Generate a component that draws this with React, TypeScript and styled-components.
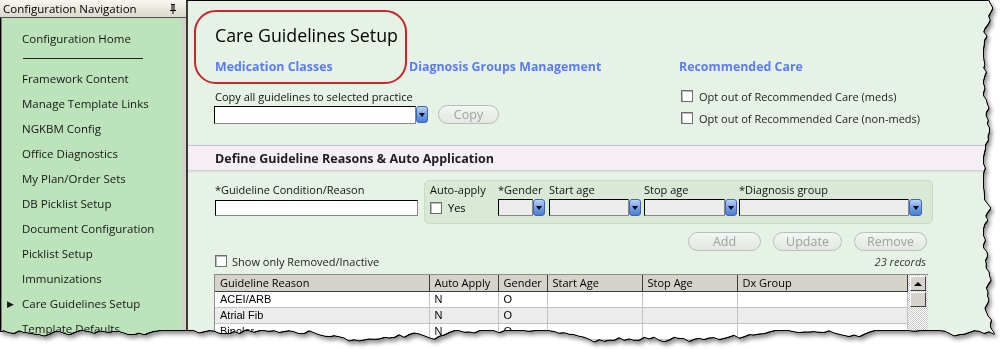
import React from "react";
import styled, { createGlobalStyle } from "styled-components";

const GlobalStyle = createGlobalStyle`
  html, body { margin: 0; padding: 0; background: #fff; }
  body { font-family: "Open Sans", "Noto Sans", sans-serif; color: #000; }
  * { box-sizing: border-box; }
`;

// deterministic "torn paper" outline for the screenshot clipping
function rnd(i: number) {
  const v = Math.sin(i * 127.1 + 311.7) * 43758.5453;
  return v - Math.floor(v);
}

function tornPolygon() {
  const pts: string[] = ["0px 0px", "988px 0px"];
  let x = 988;
  for (let y = 4; y <= 330; y += 4) {
    x += (rnd(y) - 0.5) * 7;
    x = Math.max(983, Math.min(996, x));
    pts.push(`${x.toFixed(1)}px ${y}px`);
  }
  let y = 334;
  for (let xx = 994; xx >= 0; xx -= 5) {
    y += (rnd(xx + 1000) - 0.5) * 6;
    y = Math.max(330, Math.min(342, y));
    pts.push(`${xx}px ${y.toFixed(1)}px`);
  }
  pts.push("0px 331px");
  return `polygon(${pts.join(", ")})`;
}

const TORN = tornPolygon();

const Stage = styled.div`
  width: 1007px;
  height: 349px;
  overflow: hidden;
  background: #fff;
`;

const PaperShadow = styled.div`
  width: 1000px;
  height: 346px;
  filter: drop-shadow(1px 0 0 #000) drop-shadow(0 1px 0 #000)
    drop-shadow(2px 3px 2px rgba(0, 0, 0, 0.45));
`;

const Paper = styled.div`
  width: 1000px;
  height: 346px;
  display: flex;
  background: #e7f2e6;
  clip-path: ${TORN};
`;

/* ---------- navigation ---------- */

const Nav = styled.nav`
  width: 186px;
  flex: none;
  display: flex;
  flex-direction: column;
  background: #d4d0c8;
`;

const NavHeader = styled.div`
  height: 18px;
  display: flex;
  align-items: center;
  justify-content: space-between;
  padding: 0 9px 0 3px;
  background: linear-gradient(#f8f6f0, #dcd8ce);
  border-bottom: 1px solid #505050;
  font-size: 11.5px;
`;

const NavBody = styled.div`
  flex: 1;
  margin-right: 4px;
  padding-top: 8px;
  background: #bde3bb;
  border-left: 1px solid #000;
  box-shadow: inset 1px 0 #808080;
`;

const NavItem = styled.div`
  height: 25px;
  display: flex;
  align-items: center;
  padding-left: 6px;
  font-size: 11.5px;
  color: #161616;
  white-space: nowrap;
`;

const Marker = styled.span`
  width: 15px;
  font-size: 9px;
`;

const NavRule = styled.div`
  height: 15px;
  display: flex;
  align-items: center;
  padding-left: 22px;
  &::after {
    content: "";
    width: 120px;
    height: 1px;
    background: #222;
  }
`;

/* ---------- content ---------- */

const Content = styled.main`
  flex: 1;
  position: relative;
  border-top: 1px solid #000;
  border-left: 2px solid #3a3a3a;
  background: #e7f2e6;
`;

const Highlight = styled.div`
  position: absolute;
  left: 6px;
  top: 9px;
  width: 213px;
  height: 74px;
  border: 2px solid #c3262b;
  border-radius: 22px;
  pointer-events: none;
`;

const Title = styled.h1`
  margin: 23px 0 0 27px;
  font-size: 17.8px;
  line-height: 22px;
  font-weight: normal;
`;

const TopGrid = styled.div`
  display: grid;
  grid-template-columns: 465px 1fr;
  padding-left: 26px;
`;

const Column = styled.div`
  display: flex;
  flex-direction: column;
`;

const LinkRow = styled.div`
  display: flex;
  margin-top: 13px;
  padding-left: 1px;
`;

const LinkText = styled.a<{ $w?: number }>`
  width: ${(p) => (p.$w ? `${p.$w}px` : "auto")};
  font-size: 12.4px;
  line-height: 16px;
  font-weight: bold;
  color: #5a7cf6;
  text-decoration: none;
  white-space: nowrap;
`;

const SmallLabel = styled.div`
  font-size: 11px;
  line-height: 14px;
  color: #111;
  white-space: nowrap;
`;

const CopyLabel = styled(SmallLabel)`
  margin-top: 15px;
  padding-left: 1px;
`;

const CopyRow = styled.div`
  display: flex;
  align-items: center;
  margin-top: 1px;
`;

const TextBox = styled.div<{ $w: number; $h?: number; $grey?: boolean }>`
  width: ${(p) => p.$w}px;
  height: ${(p) => p.$h ?? 17}px;
  background: ${(p) => (p.$grey ? "#ececec" : "#fff")};
  border: 1px solid #000;
  border-color: #000 #888 #888 #000;
`;

const DropButton = styled.div<{ $w?: number }>`
  width: ${(p) => p.$w ?? 12}px;
  height: 17px;
  display: flex;
  align-items: center;
  justify-content: center;
  border: 1px solid #3b64b4;
  border-radius: 3px;
  background: linear-gradient(#b9d3f7, #6f9de6 55%, #4a7fd6);
  &::after {
    content: "";
    border-left: 3px solid transparent;
    border-right: 3px solid transparent;
    border-top: 4px solid #000;
  }
`;

const PillButton = styled.button<{ $w: number }>`
  width: ${(p) => p.$w}px;
  height: 19px;
  padding: 0;
  border: 1px solid #b9bdb9;
  border-radius: 10px;
  background: linear-gradient(#f3f6f3, #e2e8e2);
  font-family: "Open Sans", "Noto Sans", sans-serif;
  font-size: 12.5px;
  line-height: 17px;
  color: #a0a0a0;
`;

const CopyButton = styled(PillButton)`
  margin-left: 10px;
`;

const RecLink = styled(LinkText)`
  margin-top: 13px;
`;

const CheckRow = styled.label<{ $first?: boolean }>`
  display: flex;
  align-items: center;
  gap: 6px;
  height: 22px;
  margin-top: ${(p) => (p.$first ? 10 : 0)}px;
  padding-left: 2px;
  font-size: 11px;
  color: #222;
`;

const Check = styled.span`
  width: 12px;
  height: 12px;
  flex: none;
  background: #fff;
  border: 1px solid #6e6e6e;
  box-shadow: inset 1px 1px #b8b8b8;
`;

const Band = styled.div`
  height: 25px;
  margin-top: 16px;
  display: flex;
  align-items: center;
  padding-left: 27px;
  background: #f5eff5;
  border-top: 1px solid #c9c1c9;
  box-shadow: 0 1px 2px rgba(0, 0, 0, 0.18);
  font-size: 12.5px;
  font-weight: bold;
  color: #202020;
`;

const FormRow = styled.div`
  display: flex;
  margin-top: 10px;
  padding-left: 26px;
`;

const ReasonField = styled.div`
  width: 210px;
  padding-top: 3px;
  display: flex;
  flex-direction: column;
  gap: 3px;
  padding-left: 1px;
`;

const GroupBox = styled.div`
  width: 509px;
  height: 44px;
  display: flex;
  padding: 2px 0 0 5px;
  background: #d9e9d5;
  border: 1px solid #cadbc7;
  border-radius: 5px;
`;

const Field = styled.div<{ $w?: number }>`
  width: ${(p) => (p.$w ? `${p.$w}px` : "auto")};
  flex: none;
  display: flex;
  flex-direction: column;
  gap: 2px;
`;

const Combo = styled.div`
  display: flex;
  height: 17px;
`;

const YesRow = styled.div`
  display: flex;
  align-items: center;
  gap: 6px;
  height: 17px;
  font-size: 11px;
`;

const ButtonRow = styled.div`
  width: 714px;
  margin: 8px 0 0 26px;
  padding-right: 1px;
  display: flex;
  justify-content: flex-end;
  gap: 12px;
`;

const ShowRow = styled.div`
  width: 714px;
  height: 16px;
  margin: 2px 0 0 26px;
  display: flex;
  align-items: center;
  justify-content: space-between;
  padding: 0 2px 0 1px;
`;

const ShowCheck = styled.label`
  display: flex;
  align-items: center;
  gap: 5px;
  font-size: 11px;
  color: #222;
`;

const Records = styled.span`
  font-size: 11px;
  font-style: italic;
  color: #333;
  align-self: flex-end;
`;

const GridBox = styled.div`
  width: 714px;
  height: 80px;
  margin: 5px 0 0 26px;
  display: flex;
  border: 1px solid #8c8c8c;
  background: #fff;
`;

const Table = styled.table`
  border-collapse: collapse;
  table-layout: fixed;
  width: 692px;
  flex: none;
  align-self: flex-start;
`;

const Th = styled.th<{ $w: number }>`
  width: ${(p) => p.$w}px;
  height: 16px;
  padding: 0 5px;
  text-align: left;
  font-weight: normal;
  font-size: 11px;
  line-height: 14px;
  background: #d6d2cc;
  border-right: 1px solid #3c3c3c;
  border-bottom: 1px solid #3c3c3c;
  white-space: nowrap;
`;

const Tr = styled.tr<{ $alt?: boolean }>`
  background: ${(p) => (p.$alt ? "#ececec" : "#fff")};
`;

const Td = styled.td`
  height: 16px;
  padding: 0 5px;
  font-family: "Liberation Sans", Arial, sans-serif;
  font-size: 11px;
  line-height: 14px;
  border-right: 1px solid #c3c3c3;
  border-bottom: 1px solid #c3c3c3;
  white-space: nowrap;
`;

const ScrollBar = styled.div`
  width: 20px;
  flex: none;
  padding: 1px 2px;
  display: flex;
  flex-direction: column;
  gap: 1px;
  background-color: #fff;
  background-image: repeating-conic-gradient(#c8c8c8 0 25%, #fff 0 50%);
  background-size: 2px 2px;
`;

const ScrollButton = styled.div<{ $arrow?: boolean }>`
  height: 15px;
  display: flex;
  align-items: center;
  justify-content: center;
  background: #d6d2cc;
  border: 1px solid;
  border-color: #fff #404040 #404040 #fff;
  &::after {
    content: "";
    display: ${(p) => (p.$arrow ? "block" : "none")};
    border-left: 4px solid transparent;
    border-right: 4px solid transparent;
    border-bottom: 4px solid #000;
  }
`;

const navItems = [
  "Framework Content",
  "Manage Template Links",
  "NGKBM Config",
  "Office Diagnostics",
  "My Plan/Order Sets",
  "DB Picklist Setup",
  "Document Configuration",
  "Picklist Setup",
  "Immunizations",
  "Care Guidelines Setup",
  "Template Defaults",
];

const columns: [string, number][] = [
  ["Guideline Reason", 214],
  ["Auto Apply", 69],
  ["Gender", 49],
  ["Start Age", 95],
  ["Stop Age", 95],
  ["Dx Group", 170],
];

const rows = [
  ["ACEI/ARB", "N", "O", "", "", ""],
  ["Atrial Fib", "N", "O", "", "", ""],
  ["Bipolar", "N", "O", "", "", ""],
  ["CHF", "N", "O", "", "", ""],
];

function PinIcon() {
  return (
    <svg width="8" height="10" viewBox="0 0 8 10">
      <path d="M2 0h4v1H5.5v5H7v1H4.5v3h-1V7H1V6h1.5V1H2z" fill="#000" />
      <rect x="3.5" y="1" width="1" height="5" fill="#d8d4ca" />
    </svg>
  );
}

export default function App() {
  return (
    <Stage>
      <GlobalStyle />
      <PaperShadow>
        <Paper>
          <Nav>
            <NavHeader>
              <span>Configuration Navigation</span>
              <PinIcon />
            </NavHeader>
            <NavBody>
              <NavItem>
                <Marker />
                Configuration Home
              </NavItem>
              <NavRule />
              {navItems.map((item) => (
                <NavItem key={item}>
                  <Marker>{item === "Care Guidelines Setup" ? "▶" : ""}</Marker>
                  {item}
                </NavItem>
              ))}
            </NavBody>
          </Nav>

          <Content>
            <Highlight />
            <Title>Care Guidelines Setup</Title>
            <TopGrid>
              <Column>
                <LinkRow>
                  <LinkText $w={194}>Medication Classes</LinkText>
                  <LinkText>Diagnosis Groups Management</LinkText>
                </LinkRow>
                <CopyLabel>Copy all guidelines to selected practice</CopyLabel>
                <CopyRow>
                  <TextBox $w={202} $h={18} />
                  <DropButton />
                  <CopyButton $w={61}>Copy</CopyButton>
                </CopyRow>
              </Column>
              <Column>
                <RecLink>Recommended Care</RecLink>
                <CheckRow $first>
                  <Check />
                  Opt out of Recommended Care (meds)
                </CheckRow>
                <CheckRow>
                  <Check />
                  Opt out of Recommended Care (non-meds)
                </CheckRow>
              </Column>
            </TopGrid>

            <Band>Define Guideline Reasons &amp; Auto Application</Band>

            <FormRow>
              <ReasonField>
                <SmallLabel>*Guideline Condition/Reason</SmallLabel>
                <TextBox $w={203} $h={16} />
              </ReasonField>
              <GroupBox>
                <Field $w={68}>
                  <SmallLabel>Auto-apply</SmallLabel>
                  <YesRow>
                    <Check />
                    Yes
                  </YesRow>
                </Field>
                <Field $w={51}>
                  <SmallLabel>*Gender</SmallLabel>
                  <Combo>
                    <TextBox $w={35} $grey />
                    <DropButton />
                  </Combo>
                </Field>
                <Field $w={95}>
                  <SmallLabel>Start age</SmallLabel>
                  <Combo>
                    <TextBox $w={80} $grey />
                    <DropButton />
                  </Combo>
                </Field>
                <Field $w={95}>
                  <SmallLabel>Stop age</SmallLabel>
                  <Combo>
                    <TextBox $w={81} $grey />
                    <DropButton />
                  </Combo>
                </Field>
                <Field>
                  <SmallLabel>*Diagnosis group</SmallLabel>
                  <Combo>
                    <TextBox $w={170} $grey />
                    <DropButton $w={13} />
                  </Combo>
                </Field>
              </GroupBox>
            </FormRow>

            <ButtonRow>
              <PillButton $w={73}>Add</PillButton>
              <PillButton $w={69}>Update</PillButton>
              <PillButton $w={73}>Remove</PillButton>
            </ButtonRow>

            <ShowRow>
              <ShowCheck>
                <Check />
                Show only Removed/Inactive
              </ShowCheck>
              <Records>23 records</Records>
            </ShowRow>

            <GridBox>
              <Table>
                <thead>
                  <tr>
                    {columns.map(([name, w]) => (
                      <Th key={name} $w={w}>
                        {name}
                      </Th>
                    ))}
                  </tr>
                </thead>
                <tbody>
                  {rows.map((r, i) => (
                    <Tr key={r[0]} $alt={i % 2 === 1}>
                      {r.map((c, j) => (
                        <Td key={j}>{c}</Td>
                      ))}
                    </Tr>
                  ))}
                </tbody>
              </Table>
              <ScrollBar>
                <ScrollButton $arrow />
                <ScrollButton />
              </ScrollBar>
            </GridBox>
          </Content>
        </Paper>
      </PaperShadow>
    </Stage>
  );
}
